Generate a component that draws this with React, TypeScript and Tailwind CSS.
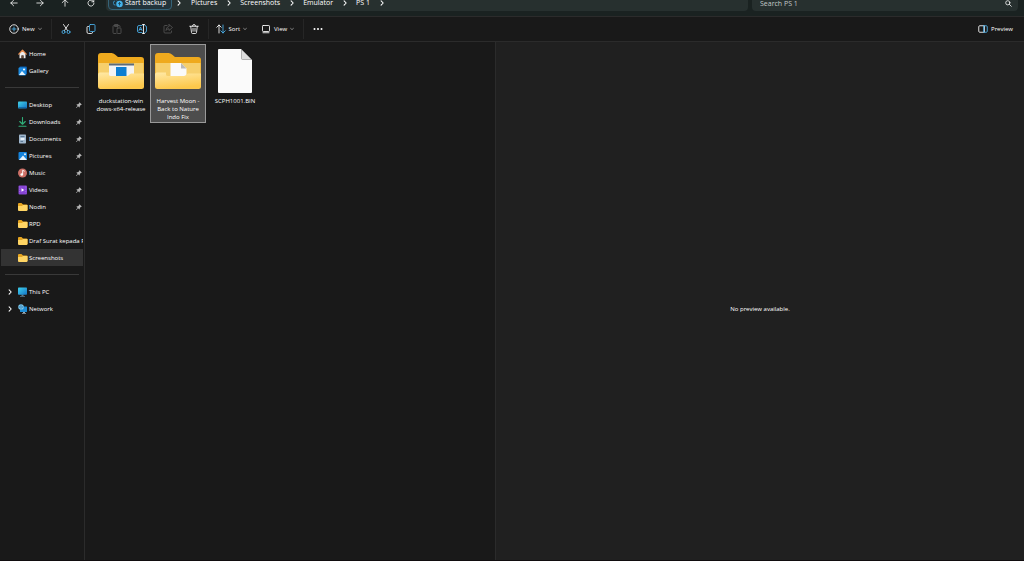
import { useState } from 'react';
import type { ReactNode } from 'react';
import { clsx } from 'clsx';

type IconProps = { className?: string };

function LineIcon({ className = 'size-2.5', children }: { className?: string; children: ReactNode }) {
  return (
    <svg className={clsx('shrink-0', className)} viewBox="0 0 20 20" fill="none" stroke="currentColor" strokeWidth={1.7} strokeLinecap="round" strokeLinejoin="round" aria-hidden="true">
      {children}
    </svg>
  );
}

const blue = '#4cb4ee';

function Chevron({ className = 'size-1.5' }: IconProps) {
  return (
    <LineIcon className={className}>
      <path d="M7 3l7 7-7 7" strokeWidth={3.5} />
    </LineIcon>
  );
}

function ChevronDown() {
  return (
    <LineIcon className="size-1 text-[#a0a0a0]">
      <path d="M3 7l7 6 7-6" strokeWidth={4} />
    </LineIcon>
  );
}

function PinIcon() {
  return (
    <svg className="size-1.5 shrink-0" viewBox="0 0 12 12" aria-hidden="true">
      <path d="M7 .5L11.5 5l-1 .8-1 .1-1.8 2-.2 2.3-1 .8-2.3-2.3L1 12 0 11l3.3-3.2L1 5.5l.8-1 2.3-.2 2-1.8.1-1z" fill="#b5b5b5" />
    </svg>
  );
}

function HomeIcon() {
  return (
    <svg className="size-2.5 shrink-0" viewBox="0 0 20 20" aria-hidden="true">
      <path d="M3 9l6-6 6 6v9.500h-4V13H7v5.500H3z" fill="#ececec" />
      <path d="M7 13h4v5.500H7z" fill="#6b4a37" />
      <path d="M1.500 10.200L9 2.500l7.500 7.700" fill="none" stroke="#ee9355" strokeWidth={2.4} strokeLinecap="round" strokeLinejoin="round" />
    </svg>
  );
}

function GalleryIcon() {
  return (
    <svg className="size-2.5 shrink-0" viewBox="0 0 20 20" aria-hidden="true">
      <rect x="3" y="1" width="15" height="16" rx="2" fill="#0b5cad" />
      <rect x="1" y="3" width="15" height="16" rx="2" fill="#1d8be0" />
      <path d="M2 18l6-8 7 8z" fill="#e7f5ff" />
      <circle cx="12" cy="7" r="2" fill="#fff" />
    </svg>
  );
}

function PicturesIcon() {
  return (
    <svg className="size-2.5 shrink-0" viewBox="0 0 20 20" aria-hidden="true">
      <rect x="1" y="2" width="17" height="16" rx="2" fill="#1583dc" />
      <path d="M2 18l8-9 8 9z" fill="#eaf6ff" />
      <circle cx="14" cy="6.500" r="1.800" fill="#fff" />
    </svg>
  );
}

function DesktopIcon() {
  return (
    <svg className="size-2.5 shrink-0" viewBox="0 0 20 20" aria-hidden="true">
      <defs>
        <linearGradient id="desktop" x2="1" y2="1">
          <stop stopColor="#43d3e8" />
          <stop offset="1" stopColor="#1272c4" />
        </linearGradient>
      </defs>
      <rect y="3" width="18" height="14" rx="1.500" fill="url(#desktop)" />
      <path d="M1 15h16" stroke="#0f5c9c" strokeWidth={1.5} />
    </svg>
  );
}

function DownloadsIcon() {
  return (
    <LineIcon className="size-2.5 text-[#2fae79]">
      <path d="M9 1v13M3.500 9L9 14.500 14.500 9M2 18.500h14" strokeWidth={2.2} />
    </LineIcon>
  );
}

function DocumentsIcon() {
  return (
    <svg className="size-2.5 shrink-0" viewBox="0 0 20 20" aria-hidden="true">
      <rect x="2" y="1" width="14" height="18" rx="1.500" fill="#9fb6cc" />
      <path d="M5 5h8M5 15h5" stroke="#4c6a87" strokeWidth={1.6} />
      <path d="M5 8h8v4H5z" fill="#e7f0f8" />
    </svg>
  );
}

function MusicIcon() {
  return (
    <svg className="size-2.5 shrink-0" viewBox="0 0 20 20" aria-hidden="true">
      <circle cx="9" cy="10" r="9" fill="#cc7067" />
      <circle cx="7.500" cy="13" r="2.600" fill="#fff" />
      <path d="M9.300 13V4.500l4 2" fill="none" stroke="#fff" strokeWidth={1.8} />
    </svg>
  );
}

function VideosIcon() {
  return (
    <svg className="size-2.5 shrink-0" viewBox="0 0 20 20" aria-hidden="true">
      <rect x="1" y="1" width="17" height="18" rx="2" fill="#8644d4" />
      <path d="M3.500 3v14M15.500 3v14" stroke="#a873e6" strokeWidth={1.8} strokeDasharray="2 2.500" />
      <path d="M7 6.500l5.500 3.500L7 13.500z" fill="#fff" />
    </svg>
  );
}

function SmallFolderIcon() {
  return (
    <svg className="size-2.5 shrink-0" viewBox="0 0 20 20" aria-hidden="true">
      <path d="M0 4q0-2 2-2h5l3 3h7q2 0 2 2v9H0z" fill="#e6a520" />
      <path d="M0 8h8l2-2h9v10q0 2-2 2H2q-2 0-2-2z" fill="#ffd564" />
    </svg>
  );
}

function ThisPcIcon() {
  return (
    <svg className="size-2.5 shrink-0" viewBox="0 0 20 20" aria-hidden="true">
      <defs>
        <linearGradient id="monitor" x2="1" y2="1">
          <stop stopColor="#3fd3ed" />
          <stop offset="1" stopColor="#1574c8" />
        </linearGradient>
      </defs>
      <path d="M7 15h4v3h3v1.500H4V18h3z" fill="#5f7c8e" />
      <rect y="1" width="18" height="14.500" rx="1.500" fill="url(#monitor)" />
    </svg>
  );
}

function NetworkIcon() {
  return (
    <svg className="size-2.5 shrink-0" viewBox="0 0 20 20" aria-hidden="true">
      <path d="M10 15h4v3h2v1.500H8V18h2z" fill="#9aa8b2" />
      <rect x="4" y="5" width="14" height="11" rx="1" fill="#1d8dd6" />
      <circle cx="6" cy="6" r="5.500" fill="#8fd6f5" />
      <path d="M1 6h10M6 1c-3 3-3 7 0 10M6 1c3 3 3 7 0 10" fill="none" stroke="#1d6fa8" strokeWidth={1.2} />
    </svg>
  );
}

function BigFolder({ content }: { content: 'window' | 'page' }) {
  const id = `folder-${content}`;
  return (
    <svg className="h-9 w-[46px]" viewBox="0 0 92 72" aria-hidden="true">
      <defs>
        <linearGradient id={id} x2="0.300" y2="1">
          <stop stopColor="#ffe9a6" />
          <stop offset="1" stopColor="#fdc84b" />
        </linearGradient>
      </defs>
      <path d="M0 6q0-6 6-6h21q4 0 7 3l6 5h46q6 0 6 6v45H0z" fill="#efaa1e" />
      <path d="M1 20h90v32H1z" fill="#f6cf6c" />
      {content === 'window' ? (
        <>
          <path d="M22 23h50v28H22z" fill="#f4f4f4" />
          <path d="M22 21h50v4H22z" fill="#5c6b7a" />
          <path d="M36 28h21v20H36z" fill="#0d7ed2" />
        </>
      ) : (
        <>
          <path d="M31 20h21l11 11v22H31z" fill="#fafafa" />
          <path d="M52 20v11h11z" fill="#b9b9b9" />
        </>
      )}
      <path d="M0 43q0-4 4-4h18v4q0 3 4 3h31q3 0 6-3l3-2h26v26q0 5-5 5H5q-5 0-5-5z" fill={`url(#${id})`} />
    </svg>
  );
}

function BlankFile() {
  return (
    <svg className="h-[44px] w-[34px]" viewBox="0 0 68 88" aria-hidden="true">
      <path d="M2 0h44l22 22v64q0 2-2 2H2q-2 0-2-2V2q0-2 2-2z" fill="#fafafa" />
      <path d="M47 1v18q0 2 2 2h18z" fill="#dedede" stroke="#777" strokeWidth={1} />
    </svg>
  );
}

const navButtons = [
  { label: 'Back', path: 'M18 10H2M9 3l-7 7 7 7' },
  { label: 'Forward', path: 'M2 10h16M11 3l7 7-7 7' },
  { label: 'Up', path: 'M10 18V2M3 9l7-7 7 7' },
  { label: 'Refresh', path: 'M16.500 6.500A7.500 7.500 0 1 0 17.500 10M17 2v5h-5' },
];

const crumbs = ['Pictures', 'Screenshots', 'Emulator', 'PS 1'];

const commands = [
  {
    label: 'Cut',
    enabled: true,
    icon: (
      <>
        <path d="M5 1l8 12M15 1L7 13" />
        <circle cx="5" cy="16" r="3" stroke={blue} />
        <circle cx="15" cy="16" r="3" stroke={blue} />
      </>
    ),
  },
  {
    label: 'Copy',
    enabled: true,
    icon: (
      <>
        <path d="M5 5H3.500Q2 5 2 6.500V16q0 3 3 3h6q2 0 2-2" />
        <rect x="7" y="1" width="11" height="14" rx="2" stroke={blue} />
      </>
    ),
  },
  {
    label: 'Paste',
    enabled: false,
    icon: (
      <>
        <path d="M8 19H4q-2 0-2-2V5q0-2 2-2h10q2 0 2 2v1M6 1h6v4H6z" />
        <rect x="10" y="8" width="8" height="11" rx="1.500" />
      </>
    ),
  },
  {
    label: 'Rename',
    enabled: true,
    icon: (
      <>
        <path d="M10 3H4Q1 3 1 6v8q0 3 3 3h6M16 3q3 0 3 3v8q0 3-3 3" stroke={blue} />
        <path d="M4 13l3-7 3 7M5 11h4" stroke={blue} />
        <path d="M13 1v18M11 1h4M11 19h4" />
      </>
    ),
  },
  {
    label: 'Share',
    enabled: false,
    icon: <path d="M8 3H4Q2 3 2 5v11q0 2 2 2h11q2 0 2-2v-2M12 1l7 6-7 6V9.500Q8 9 6 13q0-7 6-8.500z" />,
  },
  {
    label: 'Delete',
    enabled: true,
    icon: <path d="M1.500 4.500h17M7 4q0-3 3-3t3 3M3.500 5l1.500 12q.3 2 2 2h6q1.700 0 2-2L16.500 5M8 8.500v6M12 8.500v6" />,
  },
];

const quickAccess = [
  { name: 'Desktop', icon: <DesktopIcon />, pinned: true },
  { name: 'Downloads', icon: <DownloadsIcon />, pinned: true },
  { name: 'Documents', icon: <DocumentsIcon />, pinned: true },
  { name: 'Pictures', icon: <PicturesIcon />, pinned: true },
  { name: 'Music', icon: <MusicIcon />, pinned: true },
  { name: 'Videos', icon: <VideosIcon />, pinned: true },
  { name: 'Nodin', icon: <SmallFolderIcon />, pinned: true },
  { name: 'RPD', icon: <SmallFolderIcon /> },
  { name: 'Draf Surat kepada P', icon: <SmallFolderIcon /> },
  { name: 'Screenshots', icon: <SmallFolderIcon />, current: true },
];

const files = [
  { lines: ['duckstation-win', 'dows-x64-release'], icon: <BigFolder content="window" /> },
  { lines: ['Harvest Moon -', 'Back to Nature', 'Indo Fix'], icon: <BigFolder content="page" /> },
  { lines: ['SCPH1001.BIN'], icon: <BlankFile /> },
];

type SidebarItemProps = {
  name: string;
  icon: ReactNode;
  pinned?: boolean;
  current?: boolean;
  expandable?: boolean;
};

function SidebarItem({ name, icon, pinned, current, expandable }: SidebarItemProps) {
  return (
    <li>
      <a
        href="#"
        aria-current={current ? 'page' : undefined}
        className={clsx('flex h-[17px] items-center overflow-hidden', current ? 'bg-[#333333]' : 'hover:bg-[#2a2a2a]')}
      >
        <span className="flex w-[17px] shrink-0 justify-center">{expandable && <Chevron />}</span>
        {icon}
        <span className="ml-px flex-1 whitespace-nowrap">{name}</span>
        {pinned && <span className="pr-px"><PinIcon /></span>}
      </a>
    </li>
  );
}

function Separator() {
  return <div className="h-5 w-px bg-[#262626]" />;
}

function SidebarDivider() {
  return <li className="flex h-[17px] items-center px-1" role="separator"><span className="h-px w-full bg-[#393939]" /></li>;
}

function AddressBar() {
  return (
    <header className="flex h-4 items-end gap-1 overflow-hidden bg-[#1a2221] pr-1.5 pb-[5px] pl-[7px] text-[7px] leading-[6px]">
      <nav className="mr-1 flex h-4 w-[91px] shrink-0 items-center justify-between" aria-label="History">
        {navButtons.map((button) => (
          <button key={button.label} aria-label={button.label} className="flex w-3.5 justify-center">
            <LineIcon className="size-2"><path d={button.path} strokeWidth={2} /></LineIcon>
          </button>
        ))}
      </nav>
      <nav className="flex h-4 flex-1 items-center rounded-b-sm bg-[#27302f] pl-0.5" aria-label="Path">
        <button className="mr-1 flex h-[14px] w-[64px] items-center gap-0.5 rounded-sm border border-[#356377] bg-[#22343b] pl-1 whitespace-nowrap">
          <svg className="size-2.5 shrink-0" viewBox="0 0 20 20" aria-hidden="true">
            <path d="M5 14a4 4 0 0 1-1-8" fill="none" stroke="#368bbb" strokeWidth={2} />
            <path d="M7 4a6 6 0 0 1 8 0" fill="none" stroke="#368bbb" strokeWidth={2} />
            <circle cx="13" cy="12" r="6.500" fill="#43b2ea" />
            <path d="M13 9v6M10.500 11.500L13 9l2.500 2.500" fill="none" stroke="#173544" strokeWidth={1.6} />
          </svg>
          Start backup
        </button>
        <ol className="flex items-center">
          <li className="mr-[9px]"><Chevron /></li>
          {crumbs.map((crumb) => (
            <li key={crumb} className="mr-2 flex items-center gap-[9px] whitespace-nowrap">
              <a href="#">{crumb}</a>
              <Chevron />
            </li>
          ))}
        </ol>
      </nav>
      <label className="flex h-4 w-[266px] items-center rounded-b-sm bg-[#27302f] px-1.5 pl-2">
        <input type="search" aria-label="Search PS 1" placeholder="Search PS 1" className="min-w-0 flex-1 bg-transparent outline-none placeholder:text-[#c3c8c7]" />
        <LineIcon className="size-[7px]">
          <circle cx="8" cy="8" r="6" strokeWidth={2.2} />
          <path d="M12.500 12.500L18 18" strokeWidth={2.2} />
        </LineIcon>
      </label>
    </header>
  );
}

function Toolbar() {
  return (
    <div className="flex h-[26px] items-center border-y border-[#2b2b2b] bg-[#191919] pr-[11px] pl-[9px]" role="toolbar" aria-label="Commands">
      <button className="mr-[9px] flex items-center gap-[3px]">
        <LineIcon className="size-2.5">
          <circle cx="10" cy="10" r="8.500" />
          <path d="M10 6v8M6 10h8" stroke={blue} />
        </LineIcon>
        <span>New</span>
        <ChevronDown />
      </button>
      <Separator />
      <div className="mx-[7px] flex w-[142px] items-center justify-between">
        {commands.map((command) => (
          <button key={command.label} aria-label={command.label} disabled={!command.enabled} className="flex w-3.5 justify-center disabled:opacity-25">
            <LineIcon>{command.icon}</LineIcon>
          </button>
        ))}
      </div>
      <Separator />
      <button className="ml-[7px] flex items-center gap-[3px]">
        <LineIcon>
          <path d="M6 18V2M1.500 6.500L6 2l4.500 4.500" />
          <path d="M14 2v16M9.500 13.500L14 18l4.500-4.500" stroke={blue} />
        </LineIcon>
        <span>Sort</span>
        <ChevronDown />
      </button>
      <button className="mr-[9px] ml-3.5 flex items-center gap-[3px]">
        <LineIcon>
          <rect x="3" y="3" width="14" height="12" rx="1.500" />
          <path d="M4 17.500h12" />
        </LineIcon>
        <span>View</span>
        <ChevronDown />
      </button>
      <Separator />
      <button className="ml-[9px] flex" aria-label="See more">
        <svg className="size-2.5" viewBox="0 0 20 20" fill="currentColor" aria-hidden="true">
          <circle cx="3" cy="10" r="2" />
          <circle cx="10" cy="10" r="2" />
          <circle cx="17" cy="10" r="2" />
        </svg>
      </button>
      <button className="ml-auto flex items-center gap-[3px]">
        <LineIcon>
          <path d="M12 3.500H3.500q-2 0-2 2v9q0 2 2 2H12z" />
          <path d="M12 3.500h4.500q2 0 2 2v9q0 2-2 2H12z" stroke={blue} />
        </LineIcon>
        <span>Preview</span>
      </button>
    </div>
  );
}

export default function App() {
  const [selected, setSelected] = useState(1);

  return (
    <div className="flex min-h-screen flex-col border-b border-[#100c0e] bg-[#191919] font-['Open_Sans','Noto_Sans',sans-serif] text-[6px] leading-[8px] text-white">
      <AddressBar />
      <Toolbar />
      <div className="flex flex-1">
        <nav className="w-[85px] shrink-0 border-r border-[#2b2b2b] pt-[3px] pr-px pl-px" aria-label="Locations">
          <ul>
            <SidebarItem name="Home" icon={<HomeIcon />} />
            <SidebarItem name="Gallery" icon={<GalleryIcon />} />
            <SidebarDivider />
            {quickAccess.map((item) => (
              <SidebarItem key={item.name} {...item} />
            ))}
            <SidebarDivider />
            <SidebarItem name="This PC" icon={<ThisPcIcon />} expandable />
            <SidebarItem name="Network" icon={<NetworkIcon />} expandable />
          </ul>
        </nav>
        <div className="grid flex-1 grid-cols-[410fr_529fr]">
          <main className="flex flex-wrap content-start items-start gap-px pt-0.5 pl-2">
            {files.map((file, index) => (
              <button
                key={file.lines[0]}
                aria-pressed={selected === index}
                onClick={() => setSelected(index)}
                className={clsx(
                  'flex w-14 flex-col items-center border pb-px',
                  selected === index ? 'border-[#999999] bg-[#4d4d4d]' : 'border-transparent',
                )}
              >
                <span className="flex h-[52px] items-center">{file.icon}</span>
                {file.lines.map((line) => (
                  <span key={line} className="whitespace-nowrap">{line}</span>
                ))}
              </button>
            ))}
          </main>
          <aside className="flex items-center justify-center border-l border-[#2b2b2b] bg-[#202020] pt-4" aria-label="Preview">
            <p>No preview available.</p>
          </aside>
        </div>
      </div>
    </div>
  );
}
